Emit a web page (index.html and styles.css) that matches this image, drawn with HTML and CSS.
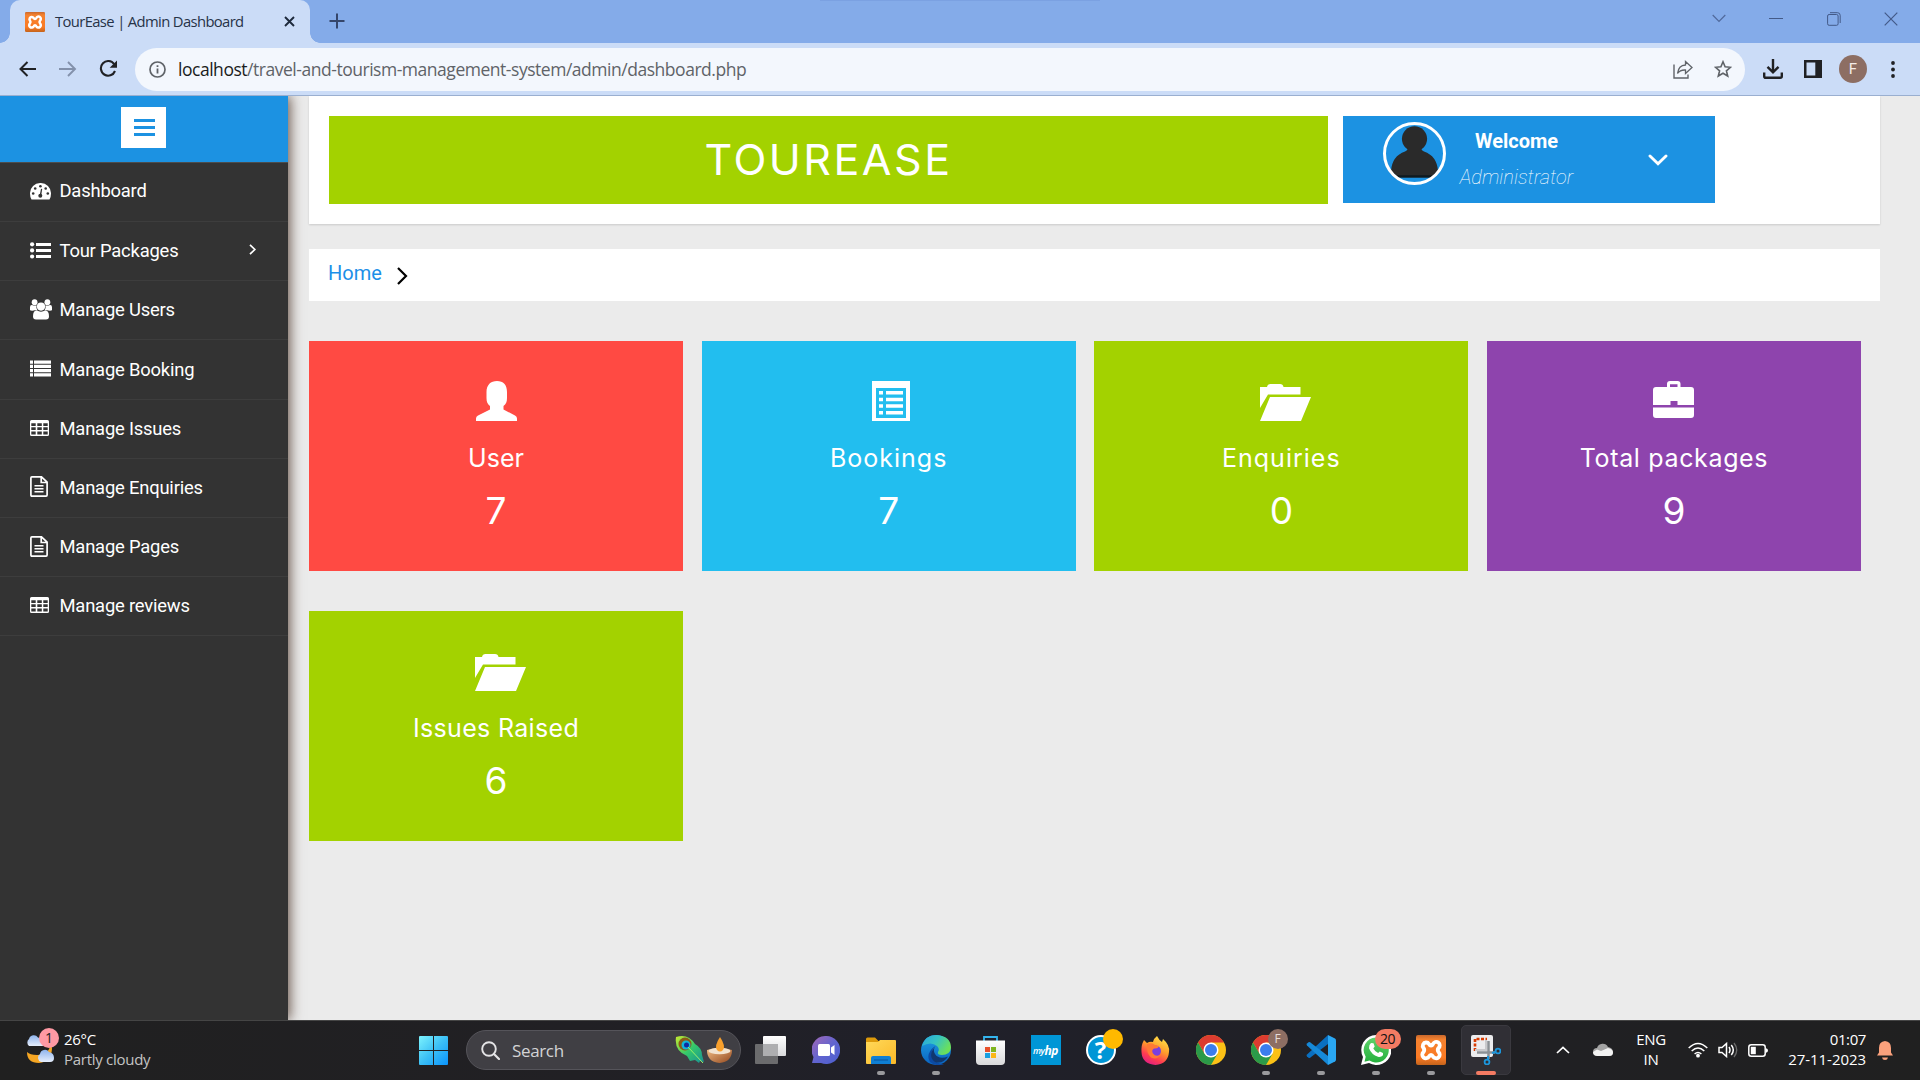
FILE: index.html
```html
<!DOCTYPE html>
<html lang="en">
<head>
<meta charset="utf-8">
<title>TourEase | Admin Dashboard</title>
<link rel="stylesheet" href="styles.css">
</head>
<body>
<svg class="defs" width="0" height="0" aria-hidden="true">
  <defs>
    <linearGradient id="win" x1="0" y1="0" x2="1" y2="1"><stop offset="0" stop-color="#7df3fd"/><stop offset=".5" stop-color="#3cc0f6"/><stop offset="1" stop-color="#0a93fb"/></linearGradient>
    <linearGradient id="xamppBg" x1="0" y1="0" x2="0" y2="1"><stop offset="0" stop-color="#c9682c"/><stop offset=".15" stop-color="#f5822f"/><stop offset=".75" stop-color="#fb7a24"/><stop offset="1" stop-color="#c4641c"/></linearGradient>
    <linearGradient id="folder" x1="0" y1="0" x2="1" y2="1"><stop offset="0" stop-color="#ffd95a"/><stop offset="1" stop-color="#fbb928"/></linearGradient>
    <linearGradient id="cloud" x1="0" y1="0" x2="0" y2="1"><stop offset="0" stop-color="#8fb4ec"/><stop offset="1" stop-color="#e6eefc"/></linearGradient>
    <linearGradient id="paper" x1="0" y1="0" x2="0" y2="1"><stop offset="0" stop-color="#fff"/><stop offset="1" stop-color="#d9d9db"/></linearGradient>
    <linearGradient id="chat" x1="0" y1="0" x2="1" y2="1"><stop offset="0" stop-color="#a468b6"/><stop offset=".5" stop-color="#6264cf"/><stop offset="1" stop-color="#4a5fd0"/></linearGradient>
    <linearGradient id="edgeTop" x1="0" y1="0" x2="1" y2=".5"><stop offset="0" stop-color="#2aa5de"/><stop offset=".5" stop-color="#35c3c3"/><stop offset="1" stop-color="#6ce05a"/></linearGradient>
    <linearGradient id="edgeLow" x1="0" y1="0" x2="0" y2="1"><stop offset="0" stop-color="#1fa2e4"/><stop offset="1" stop-color="#0a63c0"/></linearGradient>
    <linearGradient id="fox" x1=".8" y1="0" x2=".3" y2="1"><stop offset="0" stop-color="#ffe94a"/><stop offset=".45" stop-color="#ff9a2b"/><stop offset=".75" stop-color="#ff3d50"/><stop offset="1" stop-color="#e01d84"/></linearGradient>
    <linearGradient id="wa" x1="0" y1="0" x2="0" y2="1"><stop offset="0" stop-color="#5fd36b"/><stop offset="1" stop-color="#25b03d"/></linearGradient>
    <linearGradient id="bowl" x1="0" y1="0" x2="1" y2="1"><stop offset="0" stop-color="#f3bf85"/><stop offset="1" stop-color="#93481f"/></linearGradient>
    <linearGradient id="feather" x1="0" y1="0" x2="1" y2="1"><stop offset="0" stop-color="#c8ea2f"/><stop offset=".5" stop-color="#35c96a"/><stop offset="1" stop-color="#178f96"/></linearGradient>
    <symbol id="xampp" viewBox="0 0 30 30">
      <rect width="30" height="30" rx="2" fill="url(#xamppBg)"/>
      <path d="M10 7.500a3.400 3.400 0 0 0-2.500 5.500q1.500 2 0 4a3.600 3.600 0 1 0 5.500 4.500q.8-1.500 2-1.500t2 1.500a3.600 3.600 0 1 0 5.500-4.500q-1.500-2 0-4a3.500 3.500 0 1 0-5.500-4q-.8 1.500-2 1.500t-2-1.500a3.400 3.400 0 0 0-3-1.500z" fill="none" stroke="#fff" stroke-width="3.800" stroke-linejoin="round"/>
    </symbol>
    <symbol id="chrome" viewBox="0 0 30 30">
      <circle cx="15" cy="15" r="15" fill="#fbc116"/>
      <path d="M2 7.500A15 15 0 0 1 28 7.500H15L8.500 18.800z" fill="#dc3c30"/>
      <path d="M2 7.500 8.500 18.700 21.500 18.800 15 30A15 15 0 0 1 2 7.500z" fill="#2b9a49"/>
      <circle cx="15" cy="15" r="7.500" fill="#fff"/><circle cx="15" cy="15" r="6" fill="#3b7ded"/>
    </symbol>
    <symbol id="table" viewBox="0 0 19 16">
      <path fill="#fff" fill-rule="evenodd" d="M1.500 0h16Q19 0 19 1.500v13q0 1.500-1.500 1.500h-16Q0 16 0 14.500v-13Q0 0 1.500 0zM1.300 3.300v2.700h4.400V3.300zm6 0v2.700h4.500V3.300zm6 0v2.700h4.400V3.300zm-12 4v2.800h4.400V7.300zm6 0v2.800h4.500V7.300zm6 0v2.800h4.400V7.300zm-12 4.100v3h4.400v-3zm6 0v3h4.500v-3zm6 0v3h4.400v-3z"/>
    </symbol>
    <symbol id="file" viewBox="0 0 18 21">
      <path d="M.9 2q0-1.100 1-1.100h9.600l5.600 5.200v13q0 1-1 1H1.900q-1 0-1-1zM11.200 1v5.500H17" fill="none" stroke="#fff" stroke-width="1.700"/>
      <path d="M4.500 9.800h9M4.500 12.800h9M4.500 15.800h9" stroke="#fff" stroke-width="1.500"/>
    </symbol>
    <symbol id="openfolder" viewBox="0 0 51 37">
      <path fill="#fff" d="M0 3h7q.5-3 3.500-3h9.500q3 0 3.500 3h17v7.500H8L0 24zM10 13h41L41 37H0z"/>
    </symbol>
  </defs>
</svg>

<div class="screen">
  <header class="browser">
    <div class="tabstrip">
      <div class="tab">
        <svg class="favicon" width="20" height="20"><use href="#xampp"/></svg>
        <span class="tab-title">TourEase | Admin Dashboard</span>
        <svg class="tab-close" width="11" height="11" viewBox="0 0 11 11"><path d="M1 1l9 9M10 1l-9 9" stroke="#1e2a3c" stroke-width="1.900"/></svg>
      </div>
      <svg class="new-tab" width="16" height="16" viewBox="0 0 16 16"><path d="M8 .5v15M.5 8h15" stroke="#35466b" stroke-width="2"/></svg>
      <div class="window-controls">
        <svg width="14" height="9" viewBox="0 0 14 9"><path d="M.7 1 7 7.500 13.300 1" fill="none" stroke="#50699b" stroke-width="1.200"/></svg>
        <svg width="14" height="9" viewBox="0 0 14 9"><path d="M0 4.500h14" stroke="#435a88" stroke-width="1"/></svg>
        <svg width="14" height="14" viewBox="0 0 14 14"><rect x=".6" y="2.500" width="10.500" height="10.800" rx="1.500" fill="none" stroke="#435a88"/><path d="M3 .7h7.500q2.700 0 2.700 2.700V11" fill="none" stroke="#435a88"/></svg>
        <svg width="14" height="14" viewBox="0 0 14 14"><path d="M.7.7l12.600 12.600M13.300.7.700 13.300" stroke="#435a88" stroke-width="1.200"/></svg>
      </div>
    </div>
    <div class="toolbar">
      <svg class="nav-back" width="18" height="16" viewBox="0 0 18 16"><path d="M17 8H2M8.500 1 1.500 8l7 7" fill="none" stroke="#202124" stroke-width="2"/></svg>
      <svg class="nav-forward" width="18" height="16" viewBox="0 0 18 16"><path d="M0 8h15.500M9 1l7 7-7 7" fill="none" stroke="#8391ab" stroke-width="1.900"/></svg>
      <svg class="nav-reload" width="19" height="18" viewBox="0 0 19 18"><path d="M15.200 4.200A7.300 7.300 0 1 0 16 11" fill="none" stroke="#202124" stroke-width="2.100"/><path d="M18 .5v7.300h-7.300z" fill="#202124"/></svg>
      <div class="omnibox">
        <svg width="17" height="17" viewBox="0 0 17 17"><circle cx="8.500" cy="8.500" r="7.500" fill="none" stroke="#5f6368" stroke-width="1.700"/><path d="M8.500 7.500v5M8.500 4.200v1.900" stroke="#5f6368" stroke-width="1.800"/></svg>
        <span class="url"><b>localhost</b>/travel-and-tourism-management-system/admin/dashboard.php</span>
        <svg class="share" width="20" height="19" viewBox="0 0 20 19"><path d="M1 4.500V18h14v-3.500" fill="none" stroke="#5f6368" stroke-width="1.400"/><path d="M4.500 13.500Q5.500 5.300 12.500 5V1.500L19 7.500l-6.500 6V10Q7 9.700 4.500 13.500z" fill="none" stroke="#5f6368" stroke-width="1.300"/></svg>
        <svg class="star" width="18" height="18" viewBox="0 0 18 18"><path d="M9 1.800l2.100 5 5.400.5-4.100 3.500 1.300 5.200L9 13.200 4.300 16l1.300-5.200L1.500 7.300l5.400-.5z" fill="none" stroke="#5f6368" stroke-width="1.600"/></svg>
      </div>
      <svg class="download" width="20" height="20" viewBox="0 0 20 20"><path d="M10 0v13M4.500 7.800l5.500 5.500 5.500-5.500M1.200 13.500v3.700q0 1.600 1.600 1.600h14.400q1.600 0 1.600-1.600v-3.700" fill="none" stroke="#202124" stroke-width="2.400"/></svg>
      <svg class="panel" width="18" height="18" viewBox="0 0 18 18"><path fill="#202124" fill-rule="evenodd" d="M0 0h18v18H0zM2.500 2.500v13h8.800v-13z"/></svg>
      <span class="profile">F</span>
      <svg class="kebab" width="4" height="17" viewBox="0 0 4 17"><g fill="#202124"><circle cx="2" cy="2" r="1.900"/><circle cx="2" cy="8.500" r="1.900"/><circle cx="2" cy="15" r="1.900"/></g></svg>
    </div>
  </header>

  <div class="page">
    <aside class="sidebar">
      <div class="side-head">
        <span class="menu-btn"><i></i><i></i><i></i></span>
      </div>
      <nav class="menu">
        <a><span class="ico"><svg width="21" height="17" viewBox="0 0 21 17"><path d="M10.500 0A10.300 10.300 0 0 0 0 10.500Q0 14 1.500 16.500h18Q21 14 21 10.500A10.300 10.300 0 0 0 10.500 0z" fill="#fff"/><g fill="#333"><circle cx="3.200" cy="10.500" r="1.300"/><circle cx="5.200" cy="5.500" r="1.300"/><circle cx="10.400" cy="3.200" r="1.300"/><circle cx="15.700" cy="5.500" r="1.300"/><circle cx="17.800" cy="10.500" r="1.300"/><circle cx="10.300" cy="12.700" r="2"/><path d="M11 5.800l1.200.3-1 6.500-1.500-.4z"/></g></svg></span>Dashboard</a>
        <a><span class="ico"><svg width="21" height="17" viewBox="0 0 21 17"><g fill="#fff"><circle cx="2.100" cy="2.300" r="2.100"/><circle cx="2.100" cy="8.400" r="2.100"/><circle cx="2.100" cy="14.500" r="2.100"/><path d="M6 1h15v3H6zM6 7h15v3H6zM6 13h15v3H6z"/></g></svg></span>Tour Packages<svg class="more" width="7" height="11" viewBox="0 0 7 11"><path d="M1 .8l4.800 4.700L1 10.200" fill="none" stroke="#fff" stroke-width="1.700"/></svg></a>
        <a><span class="ico"><svg width="22" height="21" viewBox="0 0 22 21"><g fill="#fff"><circle cx="4.600" cy="3.200" r="2.900"/><circle cx="17.400" cy="3.200" r="2.900"/><path d="M0 11V8.200Q0 5.800 2 6q2.600 1 4.500.2-.5 2.500.8 4.800H6q-1.500 0-2.300.6Q0 11.800 0 11zM22 11V8.200Q22 5.800 20 6q-2.600 1-4.500.2.500 2.500-.8 4.800H16q1.500 0 2.300.6 3.700.2 3.700-.6z"/><circle cx="11" cy="7.600" r="4.100"/><path d="M3 17.500q0-6 3.700-6.200 4.300 2.800 8.600 0 3.700.2 3.700 6.200 0 3-3 3H6q-3 0-3-3z"/></g></svg></span>Manage Users</a>
        <a><span class="ico"><svg width="21" height="17" viewBox="0 0 21 17"><path fill="#fff" d="M0 .5h3v3.200H0zM4 .5h17v3.200H4zM0 4.700h3v3.200H0zM4 4.700h17v3.200H4zM0 9h3v3.200H0zM4 9h17v3.200H4zM0 13.200h3v3.200H0zM4 13.200h17v3.200H4z"/></svg></span>Manage Booking</a>
        <a><span class="ico"><svg width="19" height="16"><use href="#table"/></svg></span>Manage Issues</a>
        <a><span class="ico"><svg width="18" height="21"><use href="#file"/></svg></span>Manage Enquiries</a>
        <a><span class="ico"><svg width="18" height="21"><use href="#file"/></svg></span>Manage Pages</a>
        <a><span class="ico"><svg width="19" height="16"><use href="#table"/></svg></span>Manage reviews</a>
      </nav>
    </aside>

    <main class="content">
      <section class="topbar">
        <h1 class="brand">TOUREASE</h1>
        <div class="account">
          <svg class="avatar" width="63" height="63" viewBox="0 0 63 63"><circle cx="31.500" cy="31.500" r="30" fill="#1c92e2"/><g fill="#2a2a2a"><circle cx="31.500" cy="16.800" r="12.600"/><path d="M25 25q0 3-3 4.500Q9 34 8 49l7 6.500h33l7-6.500Q54 34 41 29.500q-3-1.500-3-4.500z"/></g><path d="M13 53.200h37l-3 2.300H16z" fill="#0e1a20"/><circle cx="31.500" cy="31.500" r="30" fill="none" stroke="#fff" stroke-width="3"/></svg>
          <div class="who"><strong>Welcome</strong><em>Administrator</em></div>
          <svg class="caret" width="20" height="12" viewBox="0 0 20 12"><path d="M2 2l8 7.700L18 2" fill="none" stroke="#fff" stroke-width="2.900" stroke-linecap="round"/></svg>
        </div>
      </section>
      <section class="crumbs">
        <a>Home</a>
        <svg width="11" height="18" viewBox="0 0 11 18"><path d="M1 1l8 8-8 8" fill="none" stroke="#000" stroke-width="2.200"/></svg>
      </section>
      <section class="cards">
        <article class="card red">
          <div class="pic"><svg width="41" height="40" viewBox="0 0 41 40"><path fill="#fff" d="M21 0c6.500 0 10.300 4 10 12v5c0 4-1 6-3.500 8v3.500L39 34.500q2 1 2 3V40H0v-2.500q0-2 2-3l12-6V25c-2.500-2-3.500-4-3.500-8v-5C10.200 4 14.500 0 21 0z"/></svg></div>
          <h3>User</h3><p>7</p>
        </article>
        <article class="card sky">
          <div class="pic shift-sm"><svg width="38" height="40" viewBox="0 0 38 40"><path fill="#fff" fill-rule="evenodd" d="M0 0h38v40H0zM4 7v30h30V7z"/><path fill="#fff" d="M7 10h4v3.500H7zM14 10h17v3.500H14zM7 16.700h4v3.500H7zM14 16.700h17v3.500H14zM7 23.300h4v3.500H7zM14 23.300h17v3.500H14zM7 30h4v3.500H7zM14 30h17v3.500H14z"/></svg></div>
          <h3 class="track-lg">Bookings</h3><p>7</p>
        </article>
        <article class="card green">
          <div class="pic shift"><svg width="51" height="37"><use href="#openfolder"/></svg></div>
          <h3 class="track-lg">Enquiries</h3><p>0</p>
        </article>
        <article class="card purple">
          <div class="pic top"><svg width="41" height="37" viewBox="0 0 41 37"><path fill="#fff" fill-rule="evenodd" d="M14 6V3q0-3 3-3h7.500q3 0 3 3v3H38q3 0 3 3v15H24.500v-4h-7v4H0V9q0-3 3-3zM17 6h7.500V3.200H17zM0 26.500h41V34q0 3-3 3H3q-3 0-3-3z"/></svg></div>
          <h3 class="track-md">Total packages</h3><p>9</p>
        </article>
        <article class="card green">
          <div class="pic shift"><svg width="51" height="37"><use href="#openfolder"/></svg></div>
          <h3 class="track-sm">Issues Raised</h3><p>6</p>
        </article>
      </section>
    </main>
  </div>

  <footer class="taskbar">
    <div class="weather">
      <div class="weather-icon">
        <svg width="32" height="30" viewBox="0 0 32 30"><path d="M27 0Q29 20 13 20 6 20 3 17 3 28 15 28 27 27 28 14z" fill="#f5a623"/><path d="M5 11a4.500 4.500 0 0 1 0-7 5 5 0 0 1 9-1.500q5 .5 5 8.500z" fill="url(#cloud)"/><path d="M17 27a4.500 4.500 0 0 1-1-8 5 5 0 0 1 9-2q5 1 5 6 0 4-4 4z" fill="url(#cloud)"/></svg>
        <span class="dot pink">1</span>
      </div>
      <div class="weather-text"><span>26°C</span><small>Partly cloudy</small></div>
    </div>
    <div class="slot"><svg width="29" height="29" viewBox="0 0 29 29"><path fill="url(#win)" d="M1 0h13v14H0V1q0-1 1-1zM15 0h13q1 0 1 1v13H15zM0 15h14v14H1q-1 0-1-1zM15 15h14v13q0 1-1 1H15z"/></svg></div>
    <div class="search">
      <svg class="lens" width="19" height="19" viewBox="0 0 19 19"><circle cx="8" cy="8" r="6.800" fill="none" stroke="#e4e4e6" stroke-width="1.900"/><path d="M13 13l5 5" stroke="#e4e4e6" stroke-width="2.200" stroke-linecap="round"/></svg>
      <span>Search</span>
      <svg class="art" width="60" height="30" viewBox="0 0 60 30"><path d="M2 2Q14-2 21 9q7 4 7 11l2 7-4-1-1 2-4-3-5 1-3-5Q0 16 2 2z" fill="url(#feather)"/><circle cx="11" cy="9" r="6.500" fill="#8a5a18"/><circle cx="12" cy="10" r="4.500" fill="#12b5d8"/><circle cx="12.500" cy="10" r="2.500" fill="#102aa0"/><path d="M14 12 29 28" stroke="#9df06a" stroke-width="1"/><path d="M33 15q12-4 25 0 0 12-12.500 13Q33 27 33 15z" fill="url(#bowl)"/><ellipse cx="45.500" cy="16" rx="11" ry="3.200" fill="#f2e3cf"/><path d="M46 2q6 9 3 13-3 3-6 0-3-4 3-13z" fill="#f9a02c"/></svg>
    </div>
    <div class="apps">
      <div class="slot"><svg width="31" height="28" viewBox="0 0 31 28"><rect x="8" y="0" width="23" height="20" rx="1" fill="url(#paper)"/><rect x="0" y="8" width="23" height="20" rx="1" fill="#6b6b6d"/><rect x="8" y="8" width="15" height="12" fill="#aeaeb0"/></svg></div>
      <div class="slot"><svg width="28" height="28" viewBox="0 0 28 28"><path d="M14 0a14 14 0 1 1-5 27H0l1.500-6A14 14 0 0 1 14 0z" fill="url(#chat)"/><rect x="6" y="8" width="12" height="12" rx="1.500" fill="#fff"/><path d="M19 11.500 22.500 9v10L19 16.500z" fill="#fff"/></svg></div>
      <div class="slot run"><svg width="30" height="27" viewBox="0 0 30 27"><path d="M0 2q0-1.500 1.500-1.500H9L12.500 4H30v5H0z" fill="#dd9a0a"/><path d="M0 5h12l2-2h15q1 0 1 1v22q0 1-1 1H1q-1 0-1-1z" fill="url(#folder)"/><path d="M5 27v-6q0-2 2-2h16q2 0 2 2v6z" fill="#0f7fd4"/><path d="M8 23h14" stroke="#0a559b"/></svg></div>
      <div class="slot run"><svg width="30" height="30" viewBox="0 0 30 30"><circle cx="15" cy="15" r="15" fill="url(#edgeLow)"/><path d="M1 11Q4 0 15.500 0 30 1 30 13q-1 7-9 7-5 0-4-3 2-3-1-6-6-5-15 0z" fill="url(#edgeTop)"/><path d="M14 11q-5 5-2 12 3 6 11 6-8 3-14-2-5-8 5-16z" fill="#0c4aa3"/><path d="M14.500 11q-3 4-.5 8 4 6 13 2.500-5 8-13 5.500Q6 21 14.500 11z" fill="#11386f"/></svg></div>
      <div class="slot"><svg width="29" height="29" viewBox="0 0 29 29"><path d="M8 6V1h13v5" fill="none" stroke="#34b5ee" stroke-width="1.800"/><path d="M0 4.500h29V25q0 4-4 4H4q-4 0-4-4z" fill="url(#paper)"/><path d="M9 11h5v5H9z" fill="#e8502a"/><path d="M15 11h5v5h-5z" fill="#7fb520"/><path d="M9 17h5v5H9z" fill="#199fe0"/><path d="M15 17h5v5h-5z" fill="#fbb716"/></svg></div>
      <div class="slot"><span class="myhp"><i>my</i><b>hp</b></span></div>
      <div class="slot"><span class="help">?</span><span class="dot yellow"></span></div>
      <div class="slot"><svg width="29" height="29" viewBox="0 0 29 29"><path d="M3 4l3 3q3-2 6-1 1-4 4-6 2 4 5 6l1-3q7 6 6 13-1 12-13.500 13Q1 28 .500 16 0 9 3 4z" fill="url(#fox)"/><circle cx="14.500" cy="15" r="5.500" fill="#7a3fe0"/><path d="M6 8q5-2 8 1l4 1q-1 3-5 2.500-3 2-1 5 3 4 8 1-4 6-10 3Q5 17 6 8z" fill="#ff7a35"/></svg></div>
      <div class="slot"><svg width="30" height="30"><use href="#chrome"/></svg></div>
      <div class="slot run"><svg width="30" height="30"><use href="#chrome"/></svg><span class="dot brown">F</span></div>
      <div class="slot run"><svg width="30" height="30" viewBox="0 0 30 30"><path d="M22 0v30l7-3.500q1-.5 1-2v-19q0-1.500-1-2z" fill="#2aa7f3"/><path d="M22 0 1 19.500q-1 1 0 2l1.500 1.300q.8.500 1.600 0L22 9z" fill="#0a6fc0"/><path d="M22 30 1 10.500q-1-1 0-2l1.500-1.300q.8-.5 1.600 0L22 21z" fill="#1689d8"/></svg></div>
      <div class="slot run"><svg width="30" height="30" viewBox="0 0 30 30"><path d="M15 0a15 15 0 1 1-7 28L0 30l2-8A15 15 0 0 1 15 0z" fill="#fff"/><path d="M15 2.500A12.500 12.500 0 1 1 8.500 25.500L3.500 26.700l1.200-5A12.500 12.500 0 0 1 15 2.500z" fill="url(#wa)"/><path d="M10 8l2.500.3 1.200 3.300-1.400 1.800q1.800 3.200 4.800 4.600l1.700-1.600 3.200 1.500v2.400q-2 2.200-5 1.500-6.500-2-9-8.500Q7.500 10 10 8z" fill="#fff"/></svg><span class="dot coral">20</span></div>
      <div class="slot run"><svg width="30" height="30"><use href="#xampp"/></svg></div>
      <div class="slot active"><svg width="30" height="30" viewBox="0 0 30 30"><rect x="0" y="0" width="22" height="22" rx="2" fill="#ececee"/><path d="M4 16V4h12" fill="none" stroke="#d83b01" stroke-width="2.600" stroke-dasharray="3 1.500"/><path d="M4 15h11M15 5v11" stroke="#c9c9cc" stroke-width="2"/><path d="M17.500 6v18M6 17.500h18" stroke="#8b9095" stroke-width="2.500"/><circle cx="27" cy="16" r="2.400" fill="none" stroke="#1c96dc" stroke-width="1.800"/><circle cx="16" cy="27" r="2.400" fill="none" stroke="#1c96dc" stroke-width="1.800"/><path d="M21 18l4-1M17 21v4" stroke="#1c96dc" stroke-width="2"/></svg></div>
    </div>
    <div class="tray">
      <svg class="up" width="14" height="8" viewBox="0 0 14 8"><path d="M1 7l6-5.700L13 7" fill="none" stroke="#fff" stroke-width="1.700"/></svg>
      <svg class="onedrive" width="20" height="14" viewBox="0 0 20 14"><path d="M4 13a4 4 0 0 1 0-8 6 6 0 0 1 11-1q5 1 5 5 0 4-4 4z" fill="#a3a3a3"/><path d="M4 13q-4-.5-4-4l4-2.500 4 1.500 7-3q5 1 5 4.500 0 3.500-4 3.500z" fill="#f2f2f2"/></svg>
      <div class="lang">ENG<br>IN</div>
      <svg class="wifi" width="20" height="16" viewBox="0 0 20 16"><g fill="none" stroke="#fff" stroke-width="1.500"><path d="M.7 6q9.300-9 18.600 0M3.700 9q6.300-6 12.600 0M6.600 12q3.400-3 6.800 0"/></g><circle cx="10" cy="13.700" r="1.900" fill="#fff"/></svg>
      <svg class="vol" width="20" height="16" viewBox="0 0 20 16"><path d="M1 5.500h3L8.500 1.500v13L4 10.500H1zM11 5q2 3 0 6M13.300 3q4 5 0 10" fill="none" stroke="#fff" stroke-width="1.500"/><path d="M16 1q5.500 7 0 14" fill="none" stroke="#6b6b6b" stroke-width="1.300"/></svg>
      <svg class="bat" width="20" height="13" viewBox="0 0 20 13"><rect x=".8" y=".8" width="16.400" height="11.400" rx="2.500" fill="none" stroke="#fff" stroke-width="1.500"/><rect x="2.800" y="2.800" width="5" height="7.400" fill="#fff"/><path d="M18 4.300q2 .5 2 2.200t-2 2.200z" fill="#fff"/></svg>
      <div class="clock">01:07<br><span>27-11-2023</span></div>
      <svg class="bell" width="16" height="19" viewBox="0 0 16 19"><path d="M8 0q6 .5 6 7v4.500l2 3H0l2-3V7Q2 .5 8 0z" fill="#fba17c"/><path d="M5 16.500h6q-.5 2.500-3 2.500t-3-2.500z" fill="#fba17c"/></svg>
    </div>
  </footer>
</div>
</body>
</html>
```

FILE: styles.css
```css
* { box-sizing: border-box; }

body {
  margin: 0;
  width: 1920px;
  height: 1080px;
  overflow: hidden;
  font-family: Roboto, "Liberation Sans", sans-serif;
}

svg { display: block; flex: none; }
.defs { position: absolute; }

.screen {
  display: flex;
  flex-direction: column;
  height: 1080px;
}

/* Browser chrome */
.browser {
  flex: none;
  height: 96px;
  background: #cbdcf7;
  border-bottom: 1px solid #9aafd0;
  font-family: "Open Sans", "Noto Sans", sans-serif;
}

.tabstrip {
  display: flex;
  align-items: flex-start;
  height: 43px;
  padding-left: 10px;
  background: linear-gradient(#7ba1e2, #7ba1e2) 820px 0 / 280px 1px no-repeat #84abe9;
}

.tab {
  position: relative;
  display: flex;
  align-items: center;
  width: 300px;
  height: 43px;
  padding: 0 15px;
  background: #cbdcf7;
  border-radius: 10px 10px 0 0;
}

.tab::before,
.tab::after {
  content: "";
  position: absolute;
  bottom: 0;
  width: 10px;
  height: 10px;
}
.tab::before { left: -10px; background: radial-gradient(circle at 0 0, transparent 9.500px, #cbdcf7 10px); }
.tab::after { right: -10px; background: radial-gradient(circle at 100% 0, transparent 9.500px, #cbdcf7 10px); }

.tab-title {
  margin-left: 10px;
  padding-bottom: 2px;
  font-size: 14.800px;
  letter-spacing: -0.630px;
  color: #273347;
  white-space: nowrap;
}
.tab-close { margin-left: auto; }
.new-tab { margin: 13px 0 0 19px; }

.window-controls {
  display: flex;
  align-items: center;
  gap: 43.300px;
  height: 37px;
  margin-left: auto;
  margin-right: 22px;
}

.toolbar {
  display: flex;
  align-items: center;
  height: 52px;
  padding-left: 19px;
}
.nav-forward { margin-left: 22px; }
.nav-reload { margin-left: 22px; }

.omnibox {
  display: flex;
  align-items: center;
  width: 1610px;
  height: 43px;
  margin-left: 17px;
  padding: 0 13px 0 14px;
  background: #f3f7fd;
  border-radius: 22px;
}
.url {
  flex: 1;
  margin-left: 12px;
  font-size: 17.500px;
  letter-spacing: -0.470px;
  color: #5f6368;
}
.url b { font-weight: 400; color: #1a1c20; }
.share { margin-right: 21px; }

.download { margin-left: 18px; }
.panel { margin-left: 21px; }
.profile {
  width: 28px;
  height: 28px;
  margin-left: 17px;
  border-radius: 50%;
  background: #8d6e63;
  color: #f4ece8;
  font: 15px/28px Roboto, sans-serif;
  text-align: center;
}
.kebab { margin-left: 24px; }

/* Page */
.page {
  display: flex;
  flex: 1;
  min-height: 0;
  overflow: hidden;
  background: #ebebeb;
}

.sidebar {
  flex: none;
  width: 288px;
  background: #333;
  box-shadow: 2px 0 12px rgba(60, 35, 20, .75);
}
.side-head {
  display: flex;
  justify-content: center;
  height: 67px;
  padding: 11px 0 0;
  background: #1c92e2;
  border-bottom: 1px solid #4d4d4d;
}
.menu-btn {
  display: flex;
  flex-direction: column;
  gap: 4px;
  width: 45px;
  height: 41px;
  margin-right: 1px;
  padding: 12px 11px 12px 13px;
  background: #fff;
}
.menu-btn i { height: 3px; background: #1c92e2; }

.menu a {
  display: flex;
  align-items: center;
  height: 59.170px;
  padding: 0 32px 1px 30px;
  border-bottom: 1px solid #3d3d3d;
  color: #fff;
  font-size: 18.400px;
  letter-spacing: -0.200px;
}
.menu a:first-child { padding-bottom: 3px; }
.ico { flex: none; width: 29.500px; margin-bottom: 1px; }
.menu a:first-child .ico { margin: 1px 0 0; }
.more { margin-left: auto; margin-top: -3px; }

.content { flex: 1; padding: 0 40px 0 21px; }

.topbar {
  display: flex;
  height: 128px;
  padding: 20px;
  background: #fff;
  box-shadow: 0 1px 2px rgba(0, 0, 0, .14);
}
.brand {
  width: 999px;
  height: 88px;
  margin: 0;
  background: #a3d200;
  color: #fff;
  font: 400 43px/87px Inter, sans-serif;
  letter-spacing: 2.500px;
  text-align: center;
}
.account {
  display: flex;
  width: 372px;
  height: 87px;
  margin-left: 15px;
  padding: 6px 0 0 40px;
  background: #1c92e2;
  color: #fff;
}
.who {
  display: flex;
  flex-direction: column;
  width: 115px;
  margin-left: 13px;
  padding-top: 8px;
  text-align: center;
}
.who strong { font-size: 20px; line-height: 23px; font-weight: 700; }
.who em { margin-top: 13px; font-size: 20px; line-height: 23px; font-weight: 100; }
.caret { margin: 32px 0 0 74px; }

.crumbs {
  display: flex;
  height: 52px;
  margin-top: 25px;
  padding: 0 19px;
  background: #fff;
}
.crumbs a { font-size: 20px; line-height: 48px; color: #1c8fe8; }
.crumbs svg { margin: 18px 0 0 15px; }

.cards {
  display: grid;
  grid-template-columns: repeat(4, 374px);
  gap: 40px 18.660px;
  margin-top: 40px;
}
.card {
  height: 230px;
  color: #fff;
  font-family: Inter, sans-serif;
  text-align: center;
}
.red { background: #ff4a43; }
.sky { background: #22beef; }
.green { background: #a3d200; }
.purple { background: #8e44ad; }

.pic {
  display: flex;
  justify-content: center;
  align-items: flex-end;
  height: 80px;
}
.pic.shift-sm { padding-left: 4px; }
.pic.shift { padding-left: 9px; }
.pic.top { padding-bottom: 3px; }
.card h3 { margin: 22px 0 0; font-size: 25px; line-height: 31px; font-weight: 400; }
.card p { margin: 14px 0 0; font-size: 37px; line-height: 46px; }
.card .track-lg { letter-spacing: 1px; }
.card .track-md { letter-spacing: .650px; }
.card .track-sm { letter-spacing: .330px; }

/* Taskbar */
.taskbar {
  display: flex;
  align-items: center;
  flex: none;
  height: 60px;
  background: linear-gradient(90deg, #202020, #212024 30%, #20202a 50%, #202024 75%, #202020);
  border-top: 1px solid #454545;
  color: #fff;
  font-family: "Open Sans", "Noto Sans", sans-serif;
  font-size: 15px;
}
.weather {
  display: flex;
  width: 406.500px;
  height: 59px;
  padding: 0 0 4px 24px;
  align-items: center;
}
.weather-icon { position: relative; padding-top: 3px; }
.weather-text {
  display: flex;
  flex-direction: column;
  margin-left: 8px;
  line-height: 20px;
  letter-spacing: -0.300px;
}
.weather-text small { font-size: 15px; color: #c4c4c4; letter-spacing: -0.280px; }

.slot {
  position: relative;
  display: flex;
  align-items: center;
  justify-content: center;
  width: 55px;
  height: 59px;
  padding: 0 1px 1px 0;
}
.run::after,
.active::after {
  content: "";
  position: absolute;
  left: 50%;
  bottom: 5px;
  width: 8px;
  height: 4px;
  margin-left: -4px;
  border-radius: 2px;
  background: #9a9a9d;
}
.active::before {
  content: "";
  position: absolute;
  inset: 4px 2.500px 5px;
  border: 1px solid #3a393f;
  border-radius: 5px;
  background: #302f35;
}
.active::after { width: 20px; margin-left: -10px; background: #f47b63; }
.active svg { position: relative; }

.search {
  display: flex;
  align-items: center;
  width: 275px;
  height: 40px;
  margin: 0 2.500px 1px 4.500px;
  padding: 0 6px 0 14px;
  border: 1px solid #55545a;
  border-radius: 20px;
  background: #403f44;
  color: #d3d3d5;
  font-size: 17px;
  letter-spacing: -0.350px;
}
.search span { margin-left: 12px; }
.art { margin-left: auto; }

.apps { display: flex; }

.dot {
  position: absolute;
  top: 8px;
  right: 6px;
  width: 20px;
  height: 20px;
  border-radius: 10px;
  text-align: center;
  line-height: 20px;
}
.pink { top: -4px; right: -3px; background: #ff99a4; color: #222; font-size: 14px; }
.yellow { background: #ffb900; }
.brown { background: #8d6e63; color: #e8dcd8; font-size: 12px; }
.coral { right: 3px; width: 26px; background: #f47b63; color: #111; font-size: 14px; letter-spacing: -0.500px; }

.myhp {
  display: flex;
  align-items: center;
  justify-content: center;
  width: 30px;
  height: 30px;
  background: #0096d6;
  font-size: 9px;
  letter-spacing: -0.500px;
}
.myhp i { font-style: italic; font-weight: 600; }
.myhp b { font-size: 12px; font-style: italic; font-weight: 700; }
.help {
  width: 30px;
  height: 30px;
  border: 2px solid #fff;
  border-radius: 50%;
  background: #0096d6;
  font-size: 24px;
  font-weight: 700;
  line-height: 26px;
  text-align: center;
}

.tray {
  display: flex;
  align-items: center;
  flex: 1;
  height: 59px;
  padding: 0 0 1px 42.500px;
  line-height: 20px;
}
.onedrive { margin-left: 23px; }
.lang { width: 56px; margin-left: 10px; padding-bottom: 2px; text-align: center; letter-spacing: -0.300px; }
.wifi { margin-left: 9px; }
.vol { margin-left: 10px; }
.bat { margin-left: 10px; }
.clock { width: 90px; margin-left: 8px; padding-bottom: 3px; text-align: right; letter-spacing: -0.400px; }
.clock span { letter-spacing: -0.050px; }
.bell { margin-left: 11px; }
```
